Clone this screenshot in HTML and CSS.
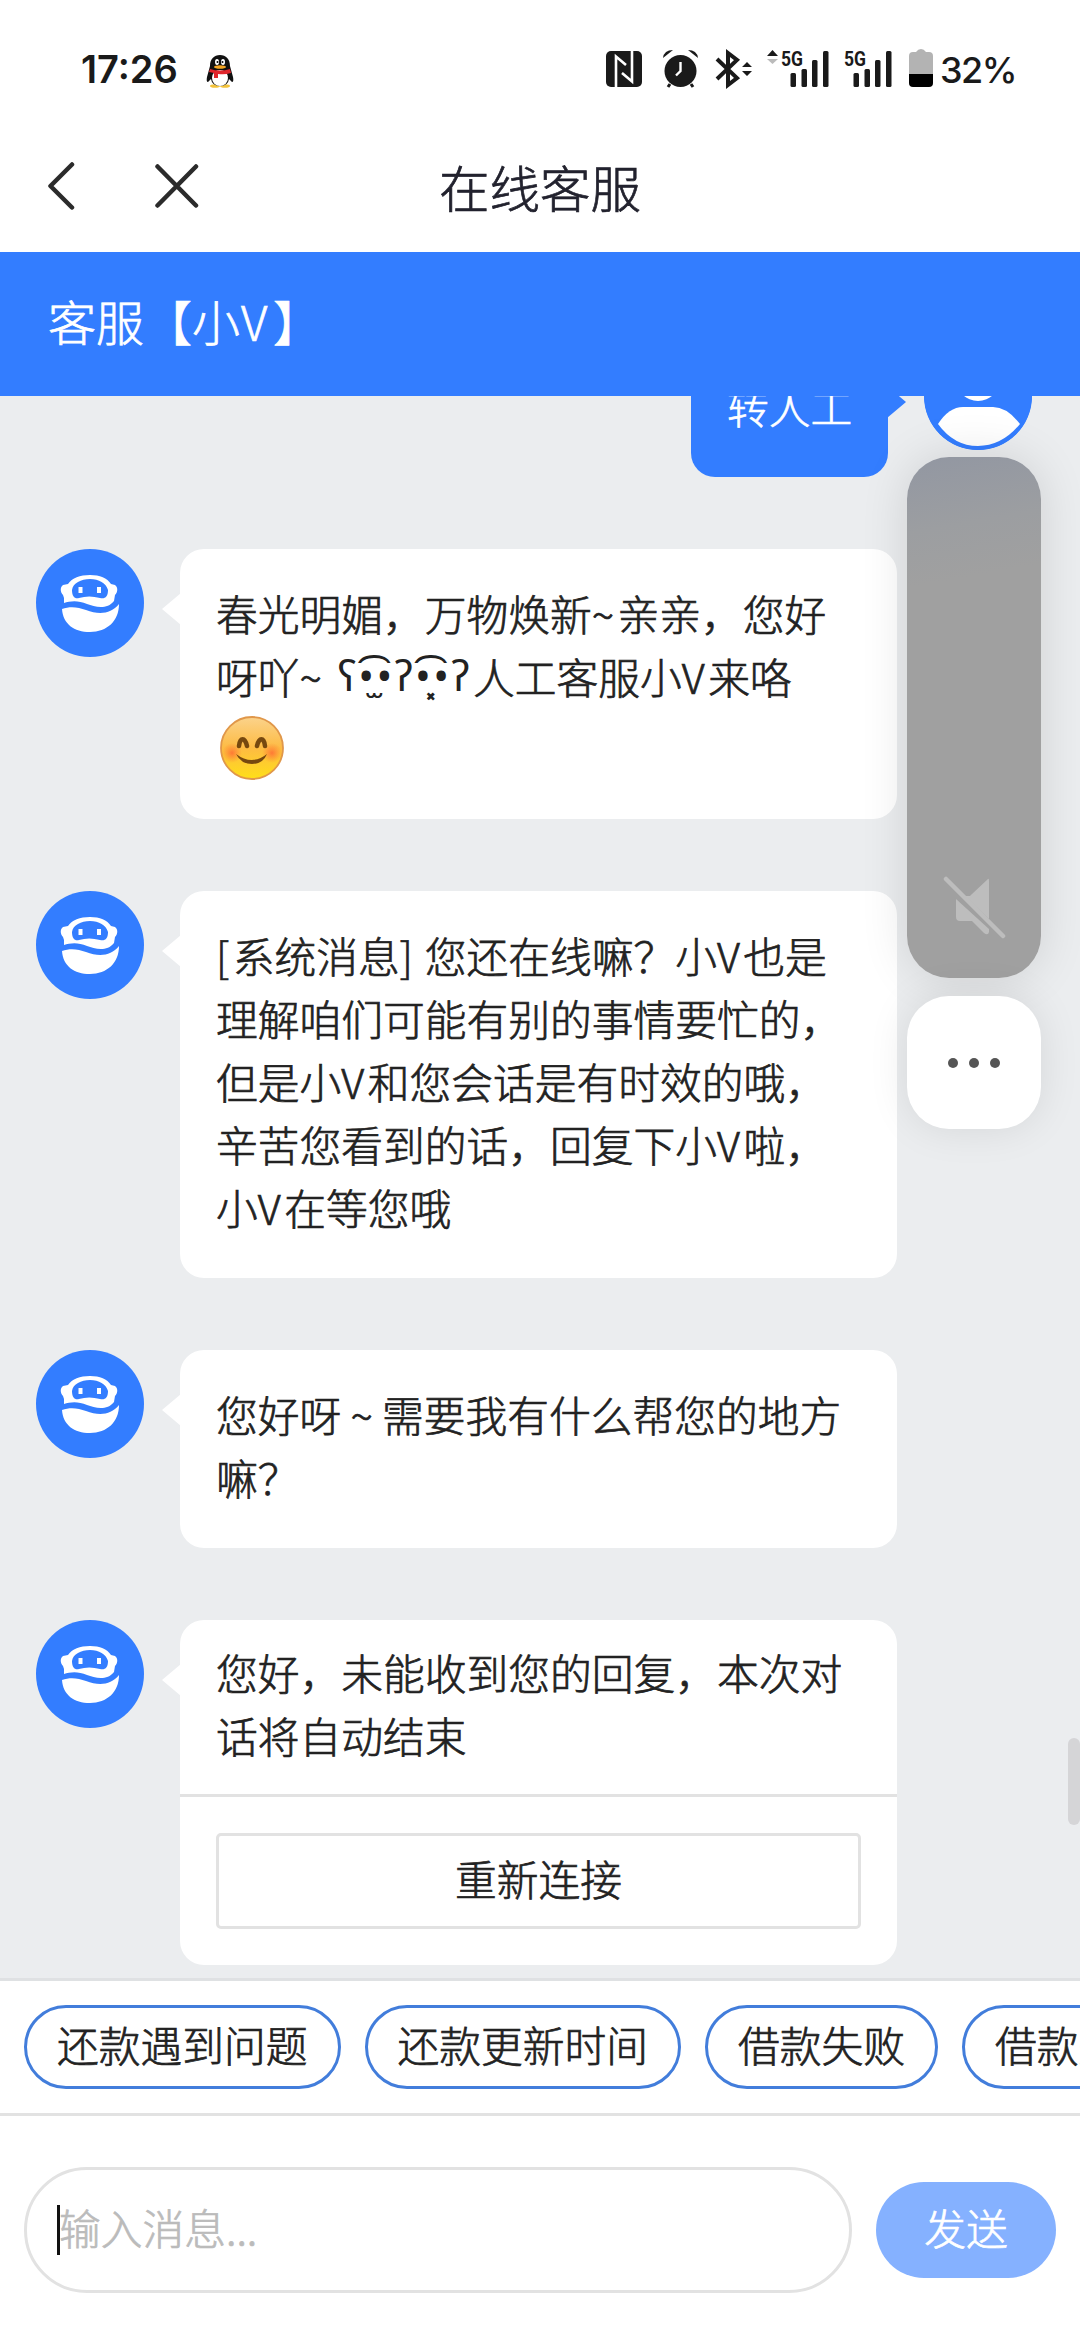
FILE: index.html
```html
<!DOCTYPE html>
<html lang="zh-CN">
<head>
<meta charset="utf-8">
<title>在线客服</title>
<link rel="stylesheet" href="styles.css">
</head>
<body>
<svg class="defs" aria-hidden="true">
  <symbol id="robot" viewBox="0 0 108 108">
    <path fill="#fff" fill-rule="evenodd" d="M28 49L27 46C24 43 24 38 27 36L32 35C36 29 44 26 54 26S71 29 75 35L79 36C82 38 82 43 79 46L78 52C71 61 59 58 51 55C42 51 34 52 28 54ZM36 41C36 48 39 50 43 49Q53 46 64 49C69 50 72 48 72 41C70 34 63 30 54 30S37 34 36 41Z"/>
    <path fill="#fff" d="M26 60C34 57 42 58 50 61C63 66 75 65 83 55C83 72 71 83 54 83C38 83 27 75 26 60Z"/>
    <path stroke="#fff" stroke-width="4" d="M44.500 38v6M63 38v6"/>
  </symbol>
</svg>
<div class="phone">
  <header class="status">
    <span class="time">17:26</span>
    <svg class="qq" width="28" height="34" viewBox="0 0 28 34">
      <ellipse cx="9" cy="32" rx="5" ry="1.800" fill="#f3c33c"/><ellipse cx="19" cy="32" rx="5" ry="1.800" fill="#f3c33c"/>
      <path fill="#111" d="M4 12C4 5 8 1 14 1S24 5 24 12L27 23Q28 28 26 28L23 25Q22 32 14 32T5 25L2 28Q0 28 1 23Z"/>
      <ellipse cx="14" cy="24" rx="8" ry="8" fill="#fff"/>
      <ellipse cx="11" cy="8" rx="2" ry="3" fill="#fff"/><ellipse cx="17" cy="8" rx="2" ry="3" fill="#fff"/>
      <circle cx="11.500" cy="8" r="1"/><circle cx="16.500" cy="8" r="1"/>
      <ellipse cx="14" cy="13" rx="6" ry="1.700" fill="#f5a623"/>
      <path fill="#e0262c" d="M4 15Q14 18 24 15L25 19Q19 21 12 20V24H8V19L3 18Z"/>
    </svg>
    <svg class="indicators" width="354" height="40" viewBox="0 0 354 40" fill="#1a1a1a">
      <rect x="0" y="1" width="36" height="36" rx="5"/>
      <path d="M10 37V6.500L20 15M26 1V31.500L16 23" fill="none" stroke="#fff" stroke-width="2.600"/>
      <circle cx="74.500" cy="21" r="16"/>
      <path d="M57 8Q58 0 67 0ZM92 8Q91 0 82 0Z"/>
      <path d="M64 34L62 37M85 34L87 37" stroke="#1a1a1a" stroke-width="3"/>
      <path d="M74.500 12V21L70 25.500" fill="none" stroke="#fff" stroke-width="2.400"/>
      <path d="M111 9L131 28L122 35V3L131 10L111 29" fill="none" stroke="#1a1a1a" stroke-width="4"/>
      <path d="M136 17L141 12L146 17ZM136 21L141 26L146 21Z"/>
      <path d="M161 6L166.500 0L172 6Z"/><path fill="#bbb" d="M161 9L166.500 14L172 9Z"/>
      <text class="net" x="175" y="15.500" textLength="22" lengthAdjust="spacingAndGlyphs">5G</text>
      <rect x="184.500" y="23" width="5.500" height="14" rx="1.500"/><rect x="195.500" y="19" width="5.500" height="18" rx="1.500"/><rect x="206" y="10" width="5.500" height="27" rx="1.500"/><rect x="217" y="1" width="5.500" height="36" rx="1.500"/>
      <text class="net" x="238" y="15.500" textLength="22" lengthAdjust="spacingAndGlyphs">5G</text>
      <rect x="247.500" y="23" width="5.500" height="14" rx="1.500"/><rect x="258.500" y="19" width="5.500" height="18" rx="1.500"/><rect x="269" y="10" width="5.500" height="27" rx="1.500"/><rect x="280" y="1" width="5.500" height="36" rx="1.500"/>
      <path fill="#b3b3b3" d="M303 24V6Q303 2 307 2H310Q312 -1 315 -1T320 2H323Q327 2 327 6V24Z"/>
      <path fill="#000" d="M303 24H327V33Q327 37 323 37H307Q303 37 303 33Z"/>
    </svg>
    <span class="battery">32%</span>
  </header>
  <nav class="titlebar">
    <svg class="navicons" width="160" height="60" viewBox="0 0 160 60" fill="none" stroke="#2b2b2b" stroke-width="4.500" stroke-linecap="round" stroke-linejoin="round">
      <path d="M24 8.500L2.500 30L24 51.500M109.500 10.500L148 49.500M148 10.500L109.500 49.500"/>
    </svg>
    <h1>在线客服</h1>
  </nav>
  <div class="banner">客服【小<span class="latin">V</span>】</div>
  <main class="chat">
    <section class="row mine">
      <div class="bubble">转人工</div>
      <svg class="avatar" viewBox="0 0 108 108"><circle cx="54" cy="54" r="54" fill="#337dff"/><circle cx="54" cy="37" r="22" fill="#fff"/><path fill="#fff" d="M14 82Q25 65 39 65H69Q83 65 96 82Q78 104 54 104T14 82Z"/></svg>
    </section>
    <section class="row">
      <svg class="avatar"><use href="#robot"/></svg>
      <div class="bubble">春光明媚，万物焕新<span class="latin">~</span>亲亲，您好<br>呀吖<span class="latin">~ </span><span class="face">ʕ•̫͡•ʔ•͓͡•ʔ</span>人工客服小<span class="latin">V</span>来咯
        <svg class="smile" width="66" height="66" viewBox="0 0 66 66">
          <defs><linearGradient id="skin" x2="0" y2="1"><stop stop-color="#fbd38c"/><stop offset=".5" stop-color="#fdbb43"/><stop offset="1" stop-color="#ffdf18"/></linearGradient><radialGradient id="blush"><stop stop-color="#ff6833" stop-opacity=".8"/><stop offset="1" stop-color="#ff7a33" stop-opacity="0"/></radialGradient></defs>
          <circle cx="33" cy="33" r="31" fill="url(#skin)" stroke="#e0974a" stroke-width="1.800"/>
          <circle cx="13" cy="38" r="10" fill="url(#blush)"/><circle cx="53" cy="38" r="10" fill="url(#blush)"/>
          <path d="M20 31C21 22 26 22 28 31M38 31C40 22 45 22 46 31" fill="none" stroke="#76480f" stroke-width="4.500" stroke-linecap="round"/>
          <path fill="#76480f" d="M17 39Q33 51 48 39Q44 49 33 49T17 39Z"/>
        </svg>
      </div>
    </section>
    <section class="row">
      <svg class="avatar"><use href="#robot"/></svg>
      <div class="bubble"><span class="latin">[</span>系统消息<span class="bracket">] </span>您还在线嘛？小<span class="latin">V</span>也是<br>理解咱们可能有别的事情要忙的，<br>但是小<span class="latin">V</span>和您会话是有时效的哦，<br>辛苦您看到的话，回复下小<span class="latin">V</span>啦，<br>小<span class="latin">V</span>在等您哦</div>
    </section>
    <section class="row">
      <svg class="avatar"><use href="#robot"/></svg>
      <div class="bubble">您好呀 ~ 需要我有什么帮您的地方<br>嘛？</div>
    </section>
    <section class="row">
      <svg class="avatar"><use href="#robot"/></svg>
      <div class="bubble ended">
        <p class="notice">您好，未能收到您的回复，本次对<br>话将自动结束</p>
        <button class="reconnect">重新连接</button>
      </div>
    </section>
    <span class="scrollbar"></span>
  </main>
  <div class="chips">
    <button>还款遇到问题</button><button>还款更新时间</button><button>借款失败</button><button>借款失败</button>
  </div>
  <footer class="composer">
    <div class="field"><span class="caret"></span><span class="placeholder">输入消息...</span></div>
    <button class="send">发送</button>
  </footer>
  <aside class="float">
    <div class="mute"><svg width="64" height="64" viewBox="0 0 64 64" fill="#bdbdbd"><path d="M30 18L46 3Q47 2 47 5V43L23 20H28ZM14 23L47 53V56Q46 60 42 57L30 45H18Q14 45 14 41Z"/><path d="M4 3L61 60" stroke="#bdbdbd" stroke-width="4.500" stroke-linecap="round"/></svg></div>
    <div class="more"><i></i><i></i><i></i></div>
  </aside>
</div>
</body>
</html>
```
FILE: styles.css
```css
* { box-sizing: border-box; }
body { margin: 0; background: #fff; }
button { font: inherit; color: inherit; letter-spacing: inherit; padding: 0; }
.defs { display: none; }
.phone {
  position: relative;
  display: flex;
  flex-direction: column;
  width: 1080px;
  height: 2344px;
  overflow: hidden;
  background: #fff;
  color: #222;
  font: 300 41.76px/63px "Noto Sans CJK SC", sans-serif;
  -webkit-text-stroke: .7px;
}
.status {
  display: flex;
  align-items: center;
  height: 122px;
  padding: 16px 0 0 81px;
  font: 600 38px/50px Inter, sans-serif;
  color: #1a1a1a;
  -webkit-text-stroke: 0;
}
.time { width: 125px; white-space: nowrap; }
.qq { flex: none; margin-top: 4px; }
.indicators { margin: 2px 0 0 372px; overflow: visible; flex: none; }
.battery { margin: 2px 0 0 -20px; font-size: 36px; font-weight: 500; letter-spacing: -1.5px; }
.net { font: 700 20px Roboto, sans-serif; }
.titlebar { position: relative; height: 130px; display: flex; align-items: center; justify-content: center; }
.navicons { position: absolute; left: 48px; top: 34px; }
h1 { margin: 0; padding-bottom: 2px; font-size: 50.500px; font-weight: 300; line-height: 70px; color: #22222e; }
.banner { height: 144px; padding-left: 48px; background: #337dff; color: #fff; font-size: 48px; line-height: 137px; }
.latin { letter-spacing: 3.5px; }
.bracket { letter-spacing: 1.3px; }
.banner .latin { margin: 0 2px 0 1px; }
.chat {
  position: relative;
  display: flex;
  flex-direction: column;
  gap: 72px;
  height: 1582px;
  padding: 0 36px;
  overflow: hidden;
  background: #ebedef;
}
.row { display: flex; gap: 36px; align-items: flex-start; flex: none; }
.mine { justify-content: flex-end; margin-top: -54px; padding-right: 12px; }
.avatar { width: 108px; height: 108px; border-radius: 50%; background: #337dff; flex: none; }
.bubble { position: relative; width: 717px; padding: 33px 36px 39px; border-radius: 24px; background: #fff; white-space: nowrap; }
.bubble::before { content: ""; position: absolute; left: -18px; top: 44px; width: 19px; height: 32px; background: #fff; clip-path: polygon(0 50%, 100% 0, 100% 100%); }
.mine .bubble { width: 197px; background: #337dff; color: #fff; }
.mine .bubble::before { left: auto; right: -18px; background: #337dff; clip-path: polygon(100% 50%, 0 0, 0 100%); }
.face { display: inline-block; width: 135px; height: 63px; vertical-align: top; font: 400 42px/60px "Noto Sans", sans-serif; letter-spacing: 2.4px; -webkit-text-stroke: 0; }
.smile { display: block; margin: 7px 0 -1px 3px; }
.ended { padding: 0 0 36px; }
.notice { margin: 0 0 36px; padding: 21px 36px 27px; border-bottom: 3px solid #e2e2e2; }
.reconnect { display: block; width: 645px; height: 96px; margin: 0 36px; padding-bottom: 5px; border: 3px solid #e2e2e2; border-radius: 5px; background: #fff; }
.scrollbar { position: absolute; right: 0; top: 1342px; width: 12px; height: 87px; border-radius: 6px; background: #d5d5d7; }
.chips { display: flex; gap: 24px; height: 138px; padding: 24px 0 0 24px; border-top: 3px solid #dfe1e3; border-bottom: 3px solid #e2e2e2; }
.chips button { flex: none; height: 84px; padding: 0 30px 6px; border: 3px solid #427ddb; border-radius: 42px; background: #fff; }
.composer { display: flex; align-items: center; gap: 24px; height: 228px; padding: 0 24px; }
.field { display: flex; align-items: center; flex: 1; height: 126px; padding-left: 30px; border: 3px solid #e2e2e2; border-radius: 63px; color: #bbb; }
.placeholder { padding-bottom: 5px; }
.caret { width: 3px; height: 50px; margin-right: -1px; background: #111; }
.send { width: 180px; height: 96px; padding-bottom: 5px; border: 0; border-radius: 48px; background: #85b1ff; color: #fff; }
.float { position: absolute; left: 907px; top: 457px; display: flex; flex-direction: column; gap: 18px; }
.mute { display: flex; align-items: flex-end; justify-content: center; width: 134px; height: 521px; padding-bottom: 38px; border-radius: 42px; background: linear-gradient(170deg, #9297a2, #9c9ea1 14%, #a0a0a0 24%); box-shadow: 0 0 48px #0000001f; }
.more { display: flex; align-items: center; justify-content: center; gap: 11px; width: 134px; height: 133px; border-radius: 42px; background: #fff; box-shadow: 0 0 40px #00000018; }
.more i { width: 10px; height: 10px; border-radius: 50%; background: #555; }
```
